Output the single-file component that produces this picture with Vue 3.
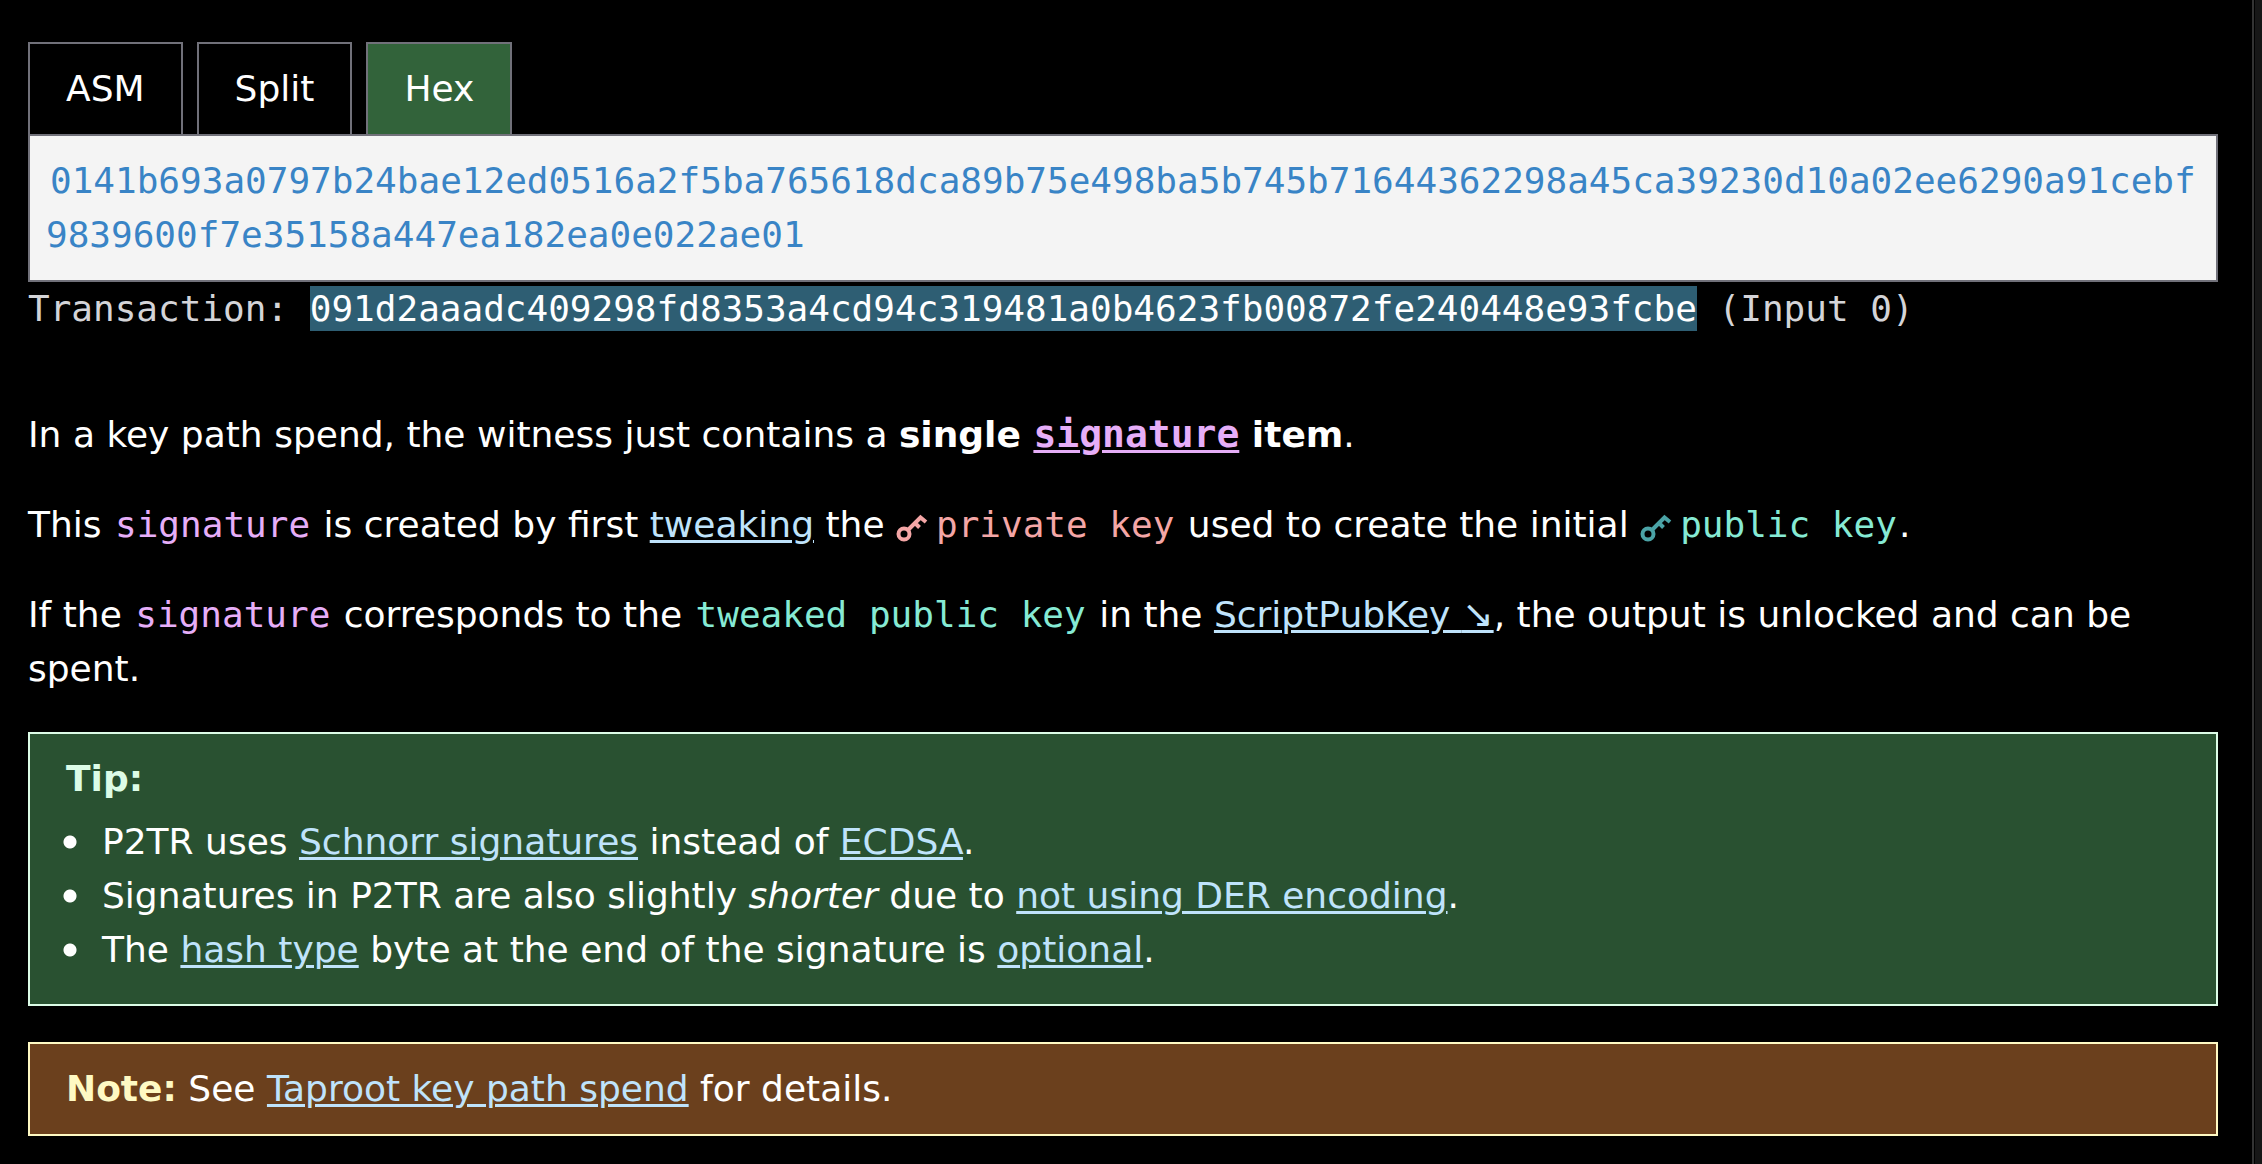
<script setup>
import { ref } from 'vue'

const tabs = ['ASM', 'Split', 'Hex']
const activeTab = ref('Hex')
const witness =
  '0141b693a0797b24bae12ed0516a2f5ba765618dca89b75e498ba5b745b71644362298a45ca39230d10a02ee6290a91cebf9839600f7e35158a447ea182ea0e022ae01'
</script>

<template>
  <div class="page">
    <main class="content">
      <div class="tabs">
        <button
          v-for="tab in tabs"
          :key="tab"
          type="button"
          class="tab"
          :class="{ active: tab === activeTab }"
          @click="activeTab = tab"
        >{{ tab }}</button>
      </div>
      <div class="script"><code>{{ witness }}</code></div>
      <div class="source">Transaction: <span class="txid">091d2aaadc409298fd8353a4cd94c319481a0b4623fb00872fe240448e93fcbe</span> (Input 0)</div>

      <p>In a key path spend, the witness just contains a <strong>single <a href="#signature" class="signature"><code>signature</code></a> item</strong>.</p>
      <p>
        This <code class="signature">signature</code> is created by first <a href="#tweak">tweaking</a> the
        <svg class="key private" viewBox="0 0 32 32" aria-hidden="true">
          <circle cx="8" cy="23" r="5.5" /><path d="M12 19L24.5 6.5L30 11M19 12L23.5 16.5" />
        </svg><code class="private">private key</code> used to create the initial
        <svg class="key public-icon" viewBox="0 0 32 32" aria-hidden="true">
          <circle cx="8" cy="23" r="5.5" /><path d="M12 19L24.5 6.5L30 11M19 12L23.5 16.5" />
        </svg><code class="public">public key</code>.
      </p>
      <p>If the <code class="signature">signature</code> corresponds to the <code class="public">tweaked public key</code> in the <a href="#scriptpubkey">ScriptPubKey <span class="arrow">↘</span></a>, the output is unlocked and can be spent.</p>

      <aside class="box tip">
        <strong class="label">Tip:</strong>
        <ul>
          <li>P2TR uses <a href="#schnorr">Schnorr signatures</a> instead of <a href="#ecdsa">ECDSA</a>.</li>
          <li>Signatures in P2TR are also slightly <em>shorter</em> due to <a href="#der">not using DER encoding</a>.</li>
          <li>The <a href="#hash-type">hash type</a> byte at the end of the signature is <a href="#optional">optional</a>.</li>
        </ul>
      </aside>
      <aside class="box note">
        <strong class="label">Note:</strong> See <a href="#key-path">Taproot key path spend</a> for details.
      </aside>
    </main>
    <div class="rail"></div>
  </div>
</template>

<style>
body {
  margin: 0;
  background: #000;
}
</style>

<style scoped>
.page {
  display: flex;
  min-height: 100vh;
  color: #fff;
  background: #000;
  font: 36px/54px Verdana, "DejaVu Sans", sans-serif;
}
.content {
  flex: 1;
  min-width: 0;
  padding: 42px 34px 28px 28px;
}
.rail {
  flex: none;
  box-sizing: border-box;
  width: 10px;
  padding-left: 1px;
  border-left: 2px solid #333;
  background: #171717 content-box;
}
.tabs {
  display: flex;
  gap: 14px;
}
.tab {
  padding: 18px 36px;
  border: 2px solid #71717a;
  border-bottom: 0;
  border-radius: 0;
  color: #fff;
  background: #000;
  font: inherit;
  cursor: pointer;
}
.tab.active {
  background: #32633a;
}
code,
.source {
  font-family: "DejaVu Sans Mono", monospace;
  font-size: 36px;
}
code {
  padding: 0 2px;
}
strong code {
  padding: 0;
  font-size: 38px;
  line-height: 36px;
}
.script {
  padding: 18px 16px;
  border: 2px solid #71717a;
  color: #3984c6;
  background: #f4f4f4;
  overflow-wrap: anywhere;
}
.script code {
  padding: 0 4px;
}
.source {
  margin-bottom: 72px;
  color: #d4d4d8;
}
.txid {
  padding: 2px 0;
  color: #fff;
  background: #2e5e73;
}
p {
  margin: 0 0 36px;
}
a {
  color: #bfe3fb;
  text-decoration: underline;
  text-decoration-thickness: 3px;
  text-underline-offset: 3px;
}
.signature {
  color: #e6aef8;
}
.private {
  color: #f4a6a6;
}
.public {
  color: #86ead4;
}
.public-icon {
  color: #4ba3a6;
}
.arrow {
  font-size: 38px;
  line-height: 36px;
}
.key {
  width: 32px;
  height: 32px;
  margin-right: 6px;
  vertical-align: -6px;
  fill: none;
  stroke: currentColor;
  stroke-width: 4;
}
.box {
  padding: 18px 36px;
  border: 2px solid;
}
.tip {
  margin-bottom: 36px;
  border-color: #dcfce7;
  background: #295131;
}
.tip .label {
  display: block;
  color: #dcfce7;
}
.note {
  border-color: #fef9c3;
  background: #6b401d;
}
.note .label {
  color: #fef9c3;
}
ul {
  margin: 9px 0 9px -8px;
  padding: 0;
  list-style: none;
}
li {
  padding-left: 44px;
  background: radial-gradient(circle at 12px 27px, #fff 6px, transparent 7px);
}
</style>
